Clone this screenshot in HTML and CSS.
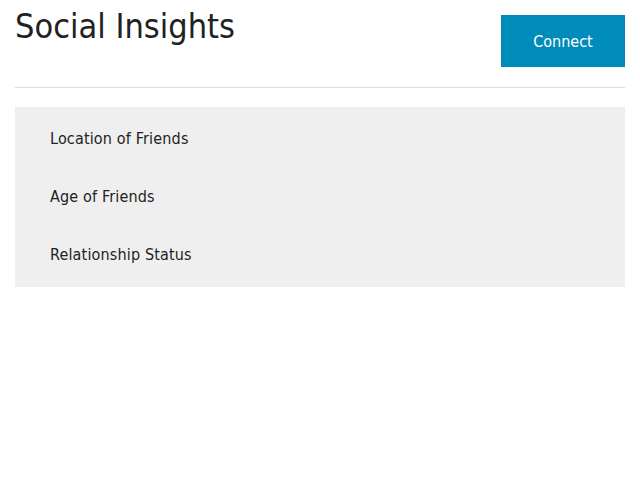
FILE: index.html
```html
<!DOCTYPE html>
<html>
<head>
<meta charset="utf-8">
<link rel="stylesheet" href="styles.css">
</head>
<body>
<div class="page">
  <header class="top">
    <h1 class="title">Social Insights</h1>
    <a class="btn" href="#">Connect</a>
  </header>
  <hr class="rule">
  <ul class="list">
    <li class="item">Location of Friends</li>
    <li class="item">Age of Friends</li>
    <li class="item">Relationship Status</li>
  </ul>
</div>
</body>
</html>
```
FILE: styles.css
```css
html, body {
  margin: 0;
  padding: 0;
  background: #fff;
}
body {
  font-family: "DejaVu Sans Condensed", "DejaVu Sans", sans-serif;
  color: #222;
}
.page {
  padding: 0 15px;
}
.top {
  display: flex;
  justify-content: space-between;
  align-items: flex-start;
  height: 87px;
}
.title {
  margin: 6px 0 0 0;
  font-weight: normal;
  font-size: 34px;
  line-height: 40px;
  color: #222;
}
.btn {
  margin-top: 15px;
  width: 124px;
  height: 52px;
  display: flex;
  align-items: center;
  justify-content: center;
  background: #008cba;
  color: #fff;
  text-decoration: none;
  font-size: 16px;
}
.rule {
  margin: 0;
  border: 0;
  border-top: 1px solid #dddddd;
  height: 0;
}
.list {
  list-style: none;
  margin: 19px 0 0 0;
  padding: 3px 0;
  background: #efefef;
}
.item {
  height: 58px;
  line-height: 58px;
  padding-left: 35px;
  font-size: 16px;
  letter-spacing: 0.16px;
  color: #222;
}
```
